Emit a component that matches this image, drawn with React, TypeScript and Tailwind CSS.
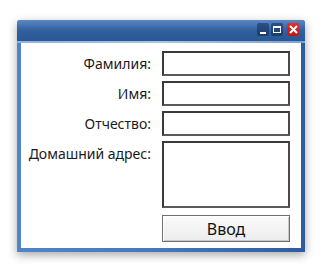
import React from "react";

const font = { fontFamily: '"Noto Sans", "Open Sans", sans-serif' };

function Field({ tall }: { tall?: boolean }) {
  return (
    <div
      className={`w-[128px] ${tall ? "h-[67px]" : "h-[25px]"} bg-white border-2 border-t-[#3a3a3a] border-l-[#3a3a3a] border-r-[#4a4a4a] border-b-[#5a5a5a]`}
    />
  );
}

function Label({ text }: { text: string }) {
  return (
    <div className="h-[25px] flex items-center justify-end whitespace-nowrap text-[14px] text-[#1a1a1a] leading-none">
      {text}
    </div>
  );
}

export default function App() {
  return (
    <div className="w-[322px] h-[272px] bg-white pl-[17px] pt-[20px]" style={font}>
      <div className="w-[288px] h-[232px] rounded-t-[3px] flex flex-col bg-gradient-to-r from-[#4f86c9] via-[#4378bc] to-[#2d5c9e] shadow-[0_3px_10px_rgba(0,0,0,0.35)]">
        <div className="h-[21px] rounded-t-[3px] bg-gradient-to-b from-[#5b88c4] via-[#31609f] to-[#2a5794] flex items-start justify-end pr-[6px] pt-[3px] gap-[2px]">
          <div className="w-[12px] h-[13px] rounded-[2px] bg-gradient-to-b from-[#2c4f86] to-[#1d3b6c] flex items-end justify-center pb-[2px]">
            <div className="w-[6px] h-[2px] bg-white" />
          </div>
          <div className="w-[12px] h-[13px] rounded-[2px] bg-gradient-to-b from-[#2c4f86] to-[#1d3b6c] flex items-center justify-center">
            <div className="w-[8px] h-[7px] border border-white border-t-2" />
          </div>
          <div className="ml-[2px] w-[12px] h-[13px] rounded-[2px] bg-gradient-to-b from-[#e0302b] to-[#b81814] flex items-center justify-center">
            <svg width="9" height="9" viewBox="0 0 9 9">
              <path d="M1 1L8 8M8 1L1 8" stroke="white" strokeWidth="2" />
            </svg>
          </div>
        </div>
        <div className="h-[2px] bg-gradient-to-r from-[#8fb2de] via-[#a9c4e6] to-[#7ea3d3]" />
        <div className="flex-1 mx-[4px] mb-[4px] bg-white pt-[8px] pl-[11px] flex gap-[11px]">
          <div className="w-[119px] flex flex-col gap-[5px]">
            <Label text="Фамилия:" />
            <Label text="Имя:" />
            <Label text="Отчество:" />
            <Label text="Домашний адрес:" />
          </div>
          <div className="flex flex-col gap-[5px]">
            <Field />
            <Field />
            <Field />
            <Field tall />
            <button className="mt-[2px] w-[128px] h-[27px] bg-gradient-to-b from-[#fbfbfb] to-[#ececec] border border-[#707070] shadow-[inset_1px_1px_0_#ffffff,inset_-1px_-1px_0_#c8c8c8] text-[16px] text-[#111] leading-none flex items-center justify-center">
              Ввод
            </button>
          </div>
        </div>
      </div>
    </div>
  );
}
